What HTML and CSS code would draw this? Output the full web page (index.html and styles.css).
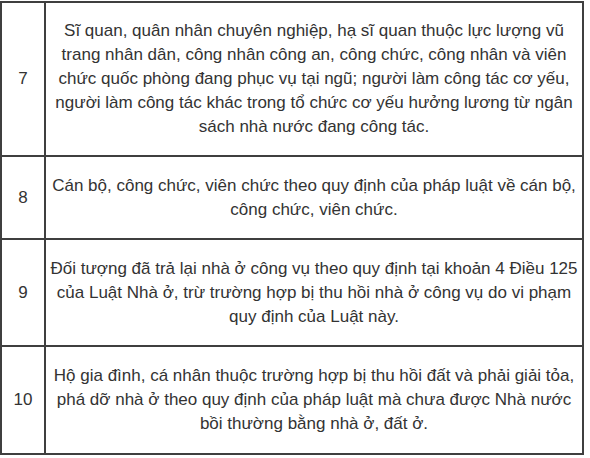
FILE: index.html
```html
<!DOCTYPE html>
<html lang="vi">
<head>
<meta charset="utf-8">
<link rel="stylesheet" href="styles.css">
</head>
<body>
<table class="list">
  <tr class="r7">
    <td class="num">7</td>
    <td class="desc">Sĩ quan, quân nhân chuyên nghiệp, hạ sĩ quan thuộc lực lượng vũ<br>trang nhân dân, công nhân công an, công chức, công nhân và viên<br>chức quốc phòng đang phục vụ tại ngũ; người làm công tác cơ yếu,<br>người làm công tác khác trong tổ chức cơ yếu hưởng lương từ ngân<br>sách nhà nước đang công tác.</td>
  </tr>
  <tr class="r8">
    <td class="num">8</td>
    <td class="desc">Cán bộ, công chức, viên chức theo quy định của pháp luật về cán bộ,<br>công chức, viên chức.</td>
  </tr>
  <tr class="r9">
    <td class="num">9</td>
    <td class="desc">Đối tượng đã trả lại nhà ở công vụ theo quy định tại khoản 4 Điều 125<br>của Luật Nhà ở, trừ trường hợp bị thu hồi nhà ở công vụ do vi phạm<br>quy định của Luật này.</td>
  </tr>
  <tr class="r10">
    <td class="num">10</td>
    <td class="desc">Hộ gia đình, cá nhân thuộc trường hợp bị thu hồi đất và phải giải tỏa,<br>phá dỡ nhà ở theo quy định của pháp luật mà chưa được Nhà nước<br>bồi thường bằng nhà ở, đất ở.</td>
  </tr>
</table>
</body>
</html>
```

FILE: styles.css
```css
html, body {
  margin: 0;
  padding: 0;
  background: #ffffff;
}
body {
  padding-top: 1px;
  font-family: "Liberation Sans", Arial, sans-serif;
  font-size: 17px;
  line-height: 24px;
  color: #333333;
}
.list {
  border-collapse: collapse;
  width: 584px;
  table-layout: fixed;
}
.list td {
  border: 2px solid #3f3f3f;
  padding: 0;
  text-align: center;
  vertical-align: middle;
  white-space: nowrap;
}
.list .num {
  width: 42px;
}
.r7 { height: 154px; }
.r8 { height: 83px; }
.r9 { height: 107px; }
.r10 { height: 108px; }
```
